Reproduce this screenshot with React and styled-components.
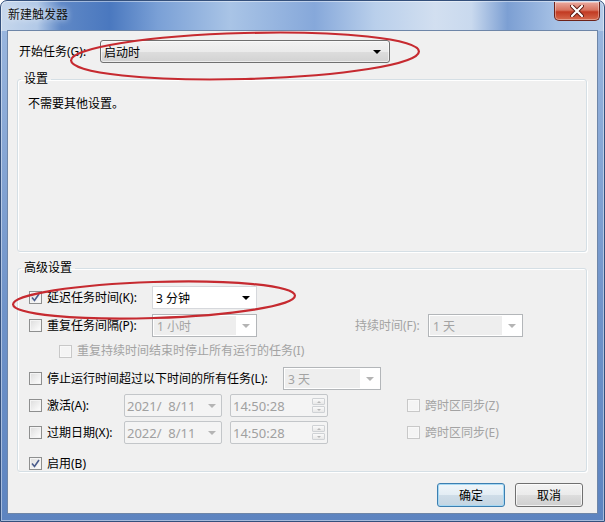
import React from 'react';
import styled, { createGlobalStyle } from 'styled-components';

const Global = createGlobalStyle`
  html, body {
    margin: 0;
    padding: 0;
    background: #ffffff;
  }
  body {
    width: 605px;
    height: 522px;
    overflow: hidden;
    font-family: "Noto Sans", "Noto Sans CJK SC", sans-serif;
    font-size: 12px;
    color: #000;
  }
`;

// Window frame (Aero glass)
const Window = styled.div`
  position: relative;
  width: 605px;
  height: 522px;
  box-sizing: border-box;
  display: flex;
  flex-direction: column;
  border: 1px solid #34507c;
  border-radius: 7px 7px 0 0;
  padding: 0 6px 7px;
  background:
    linear-gradient(to right,
      #c6d7ec 0%, #b2c9e7 6%, #5f88c6 10%, #4a78bf 18%, #7aa0d6 26%,
      #a9c4e6 38%, #86a8da 52%, #b9cfeb 62%, #d2dff0 72%, #c9d9ee 78%, #7c9fd3 84%, #a6c1e5 92%, #b5cbe8 100%)
      top / 100% 30px no-repeat,
    linear-gradient(to bottom, #9db9e0, #6f93c9 60%, #5d84c0);
  box-shadow: inset 0 0 0 1px rgba(255,255,255,0.45);
`;

const TitleBar = styled.div`
  height: 29px;
  display: flex;
  align-items: flex-start;
  justify-content: space-between;
`;

const Title = styled.div`
  padding: 6px 0 0 1px;
  line-height: 16px;
  color: #111;
  text-shadow: 0 0 6px rgba(255,255,255,0.9);
`;

const CloseButton = styled.div`
  width: 46px;
  height: 19px;
  margin: 1px -2px 0 0;
  box-sizing: border-box;
  display: flex;
  align-items: center;
  justify-content: center;
  border: 1px solid #6d2219;
  border-top: none;
  border-radius: 0 0 5px 5px;
  background: linear-gradient(to bottom, #e9a99f 0%, #d8735f 45%, #c23a22 55%, #d66a4e 100%);
  box-shadow: inset 0 0 0 1px rgba(255,255,255,0.35);
`;

const Client = styled.div`
  flex: 1;
  display: flex;
  flex-direction: column;
  border: 1px solid #6e86a8;
  background: #f0f0f0;
  padding: 9px 10px 0 9px;
`;

const StartRow = styled.div`
  display: flex;
  align-items: center;
  height: 23px;
  padding-left: 2px;
`;

const Label = styled.span`
  display: inline-block;
  width: ${p => (p.$w ? `${p.$w}px` : 'auto')};
  flex-shrink: 0;
  line-height: 16px;
  white-space: nowrap;
  color: ${p => (p.$disabled ? '#a3a3a3' : '#000')};
  margin-left: ${p => p.$ml || 0}px;
`;

const Group = styled.fieldset`
  margin: 8px 0 0;
  padding: ${p => p.$pad};
  height: ${p => p.$h}px;
  box-sizing: border-box;
  border: 1px solid #d5dfe5;
  border-radius: 3px;
  box-shadow: inset 1px 1px 0 #fff, 1px 1px 0 #fff;
  min-width: 0;
`;

const Legend = styled.legend`
  padding: 0 3px;
  margin-left: ${p => p.$ml}px;
  line-height: 16px;
`;

const Note = styled.div`
  line-height: 16px;
`;

// combo box
const Combo = styled.div`
  width: ${p => p.$w}px;
  height: ${p => p.$h || 23}px;
  margin-left: ${p => p.$ml || 0}px;
  flex-shrink: 0;
  box-sizing: border-box;
  display: flex;
  align-items: stretch;
  border: 1px solid ${p => (p.$variant === 'button' ? '#707070' : p.$variant === 'edit' ? '#d6d8dc' : '#b3b6b9')};
  border-radius: ${p => (p.$variant === 'button' ? '3px' : '0')};
  background: ${p =>
    p.$variant === 'button'
      ? 'linear-gradient(to bottom, #f3f3f3 0%, #ebebeb 50%, #dddddd 51%, #d2d2d2 100%)'
      : '#ffffff'};
  box-shadow: ${p => (p.$variant === 'button' ? 'inset 0 0 0 1px rgba(255,255,255,0.6)' : 'none')};
  color: ${p => (p.$disabled ? '#a3a3a3' : '#000')};
`;

const ComboText = styled.span`
  flex: 1;
  padding-left: ${p => p.$pl || 3}px;
  display: flex;
  align-items: center;
  white-space: pre;
  background: ${p => (p.$disabled ? '#eeeeee' : 'transparent')};
  margin: ${p => (p.$disabled ? '1px 0 1px 1px' : '0')};
`;

const ArrowBox = styled.span`
  width: ${p => p.$w || 20}px;
  display: flex;
  align-items: center;
  justify-content: center;
`;

const Arrow = styled.span`
  width: 0;
  height: 0;
  border-left: 4px solid transparent;
  border-right: 4px solid transparent;
  border-top: 4px solid ${p => (p.$disabled ? '#b4b4b4' : '#000')};
`;

// date / time fields
const Field = styled.div`
  width: 98px;
  height: 23px;
  margin-left: ${p => p.$ml || 0}px;
  flex-shrink: 0;
  box-sizing: border-box;
  display: flex;
  align-items: center;
  border: 1px solid #c3c6c9;
  border-radius: 2px;
  background: #f4f4f4;
  color: #a0a0a0;
  font-size: 13px;
`;

const FieldText = styled.span`
  flex: 1;
  padding-left: 2px;
  white-space: pre;
`;

const Spin = styled.span`
  width: 13px;
  margin-right: 2px;
  display: flex;
  flex-direction: column;
  gap: 1px;
`;

const SpinPart = styled.span`
  height: 7px;
  box-sizing: border-box;
  border: 1px solid #cfd2d5;
  border-radius: 1px;
  background: linear-gradient(#fafafa, #e8e8e8);
  display: flex;
  align-items: center;
  justify-content: center;
`;

const SpinArrow = styled.span`
  width: 0;
  height: 0;
  border-left: 2px solid transparent;
  border-right: 2px solid transparent;
  ${p => (p.$up ? 'border-bottom: 2px solid #b8b8b8;' : 'border-top: 2px solid #b8b8b8;')}
`;

// checkbox
const Box = styled.span`
  width: 13px;
  height: 13px;
  flex-shrink: 0;
  box-sizing: border-box;
  margin-left: ${p => p.$ml || 0}px;
  margin-right: 5px;
  border: 1px solid ${p => (p.$disabled ? '#c8c8c8' : '#8e8f8f')};
  background: ${p => (p.$disabled ? '#f4f4f4' : 'linear-gradient(135deg, #dcdcdc, #ffffff)')};
  box-shadow: inset 0 0 0 1px ${p => (p.$disabled ? '#f8f8f8' : '#f4f4f4')};
  display: flex;
  align-items: center;
  justify-content: center;
`;

const Row = styled.div`
  display: flex;
  align-items: center;
  height: ${p => p.$h || 23}px;
  margin-top: ${p => p.$mt || 0}px;
`;

const ButtonBar = styled.div`
  display: flex;
  justify-content: flex-end;
  gap: 10px;
  margin-top: 11px;
  padding-right: 4px;
`;

const Button = styled.div`
  width: 68px;
  height: 24px;
  box-sizing: border-box;
  display: flex;
  align-items: center;
  justify-content: center;
  border: 1px solid ${p => (p.$default ? '#3c7fb1' : '#707070')};
  border-radius: 3px;
  background: ${p =>
    p.$default
      ? 'linear-gradient(to bottom, #f0f6fa 0%, #e3edf4 50%, #cfdde8 51%, #c4d5e2 100%)'
      : 'linear-gradient(to bottom, #f3f3f3 0%, #ebebeb 50%, #dddddd 51%, #cfcfcf 100%)'};
  box-shadow: inset 0 0 0 1px ${p => (p.$default ? '#a6d8f3' : 'rgba(255,255,255,0.7)')};
`;

const Annotation = styled.svg`
  position: absolute;
  left: 0;
  top: 0;
  pointer-events: none;
`;

const CheckBox = ({ checked, disabled, ml }) => (
  <Box $disabled={disabled} $ml={ml}>
    {checked && (
      <svg width="9" height="9" viewBox="0 0 9 9">
        <path d="M1 4.5 L3.5 7.5 L8 1" fill="none" stroke="#4a5c8c" strokeWidth="1.6" />
      </svg>
    )}
  </Box>
);

const Dropdown = ({ text, w, ml, disabled, variant }) => (
  <Combo $w={w} $ml={ml} $disabled={disabled} $variant={variant}>
    <ComboText $disabled={disabled}>{text}</ComboText>
    <ArrowBox $w={variant === 'button' ? 24 : 20}>
      <Arrow $disabled={disabled} />
    </ArrowBox>
  </Combo>
);

const DateField = ({ text, ml }) => (
  <Field $ml={ml}>
    <FieldText>{text}</FieldText>
    <ArrowBox $w={18}>
      <Arrow $disabled />
    </ArrowBox>
  </Field>
);

const TimeField = ({ text, ml }) => (
  <Field $ml={ml}>
    <FieldText>{text}</FieldText>
    <Spin>
      <SpinPart><SpinArrow $up /></SpinPart>
      <SpinPart><SpinArrow /></SpinPart>
    </Spin>
  </Field>
);

export default function App() {
  return (
    <>
      <Global />
      <Window>
        <TitleBar>
          <Title>新建触发器</Title>
          <CloseButton>
            <svg width="14" height="12" viewBox="0 0 14 12">
              <path d="M2 1 L12 11 M12 1 L2 11" stroke="#5a1a12" strokeWidth="4" strokeLinecap="round" />
              <path d="M2 1 L12 11 M12 1 L2 11" stroke="#ffffff" strokeWidth="2.2" strokeLinecap="round" />
            </svg>
          </CloseButton>
        </TitleBar>

        <Client>
          <StartRow>
            <Label $w={81}>开始任务(G):</Label>
            <Dropdown text="启动时" w={290} variant="button" />
          </StartRow>

          <Group $h={181} $pad="9px 10px 0">
            <Legend $ml={-7}>设置</Legend>
            <Note>不需要其他设置。</Note>
          </Group>

          <Group $h={212} $pad="10px 11px 0">
            <Legend $ml={-8}>高级设置</Legend>
            <Row>
              <CheckBox checked />
              <Label $w={105}>延迟任务时间(K):</Label>
              <Dropdown text="3 分钟" w={105} variant="edit" />
            </Row>
            <Row $mt={5}>
              <CheckBox />
              <Label $w={105}>重复任务间隔(P):</Label>
              <Dropdown text="1 小时" w={105} disabled />
              <Label $disabled $ml={98} $w={73}>持续时间(F):</Label>
              <Dropdown text="1 天" w={95} disabled />
            </Row>
            <Row $h={16} $mt={6}>
              <CheckBox disabled ml={30} />
              <Label $disabled>重复持续时间结束时停止所有运行的任务(I)</Label>
            </Row>
            <Row $mt={8}>
              <CheckBox />
              <Label $w={236}>停止运行时间超过以下时间的所有任务(L):</Label>
              <Dropdown text="3 天" w={98} disabled />
            </Row>
            <Row $mt={4}>
              <CheckBox />
              <Label $w={77}>激活(A):</Label>
              <DateField text="2021/  8/11" />
              <TimeField text="14:50:28" ml={8} />
              <CheckBox disabled ml={79} />
              <Label $disabled>跨时区同步(Z)</Label>
            </Row>
            <Row $mt={4}>
              <CheckBox />
              <Label $w={77}>过期日期(X):</Label>
              <DateField text="2022/  8/11" />
              <TimeField text="14:50:28" ml={8} />
              <CheckBox disabled ml={79} />
              <Label $disabled>跨时区同步(E)</Label>
            </Row>
            <Row $h={15} $mt={12}>
              <CheckBox checked />
              <Label>启用(B)</Label>
            </Row>
          </Group>

          <ButtonBar>
            <Button $default>确定</Button>
            <Button>取消</Button>
          </ButtonBar>
        </Client>

        <Annotation width="605" height="522" viewBox="0 0 605 522">
          <ellipse cx="244" cy="55" rx="174" ry="23" fill="none" stroke="#c62a30" strokeWidth="2.2"
            transform="rotate(-1.5 244 55)" />
          <ellipse cx="153" cy="299" rx="141" ry="18" fill="none" stroke="#c62a30" strokeWidth="2.2"
            transform="rotate(-1.8 153 299)" />
        </Annotation>
      </Window>
    </>
  );
}
